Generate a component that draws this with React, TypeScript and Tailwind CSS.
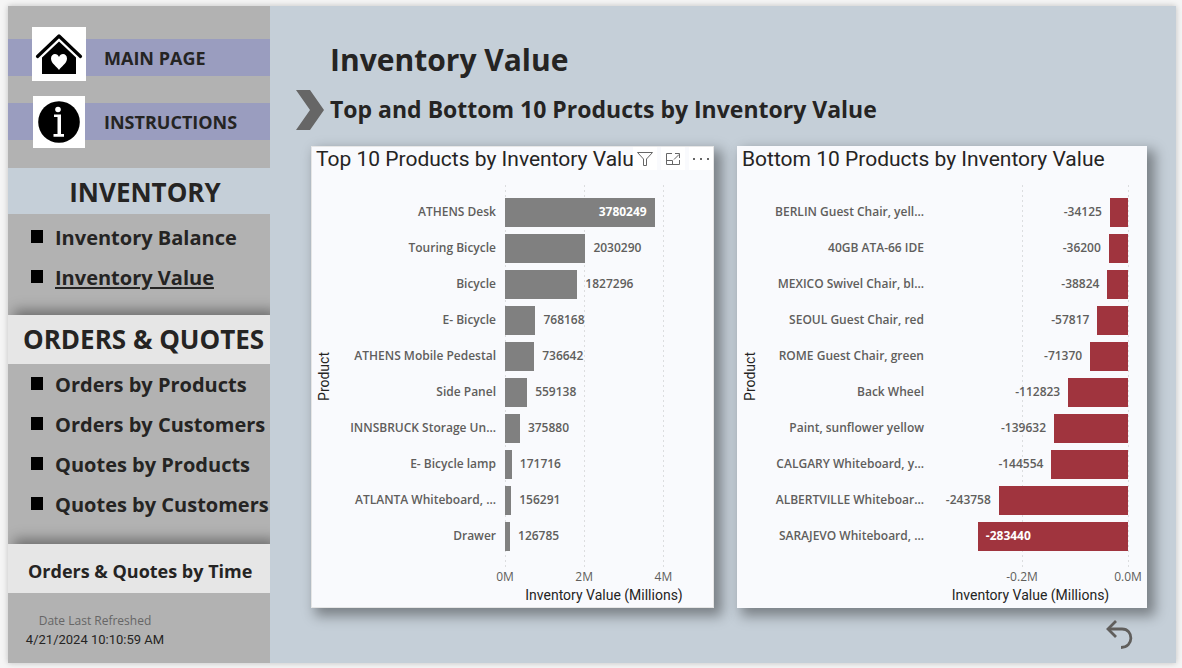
import React from "react";

type Datum = { label: string; value: number; inside?: boolean };
type Tick = { label: string; value: number };

const topProducts: Datum[] = [
  { label: "ATHENS Desk", value: 3780249, inside: true },
  { label: "Touring Bicycle", value: 2030290 },
  { label: "Bicycle", value: 1827296 },
  { label: "E- Bicycle", value: 768168 },
  { label: "ATHENS Mobile Pedestal", value: 736642 },
  { label: "Side Panel", value: 559138 },
  { label: "INNSBRUCK Storage Un...", value: 375880 },
  { label: "E- Bicycle lamp", value: 171716 },
  { label: "ATLANTA Whiteboard, ...", value: 156291 },
  { label: "Drawer", value: 126785 },
];

const bottomProducts: Datum[] = [
  { label: "BERLIN Guest Chair, yell...", value: -34125 },
  { label: "40GB ATA-66 IDE", value: -36200 },
  { label: "MEXICO Swivel Chair, bl...", value: -38824 },
  { label: "SEOUL Guest Chair, red", value: -57817 },
  { label: "ROME Guest Chair, green", value: -71370 },
  { label: "Back Wheel", value: -112823 },
  { label: "Paint, sunflower yellow", value: -139632 },
  { label: "CALGARY Whiteboard, y...", value: -144554 },
  { label: "ALBERTVILLE Whiteboar...", value: -243758 },
  { label: "SARAJEVO Whiteboard, ...", value: -283440, inside: true },
];

function HomeIcon() {
  return (
    <svg viewBox="0 0 54 54" className="size-[54px]" aria-hidden="true">
      <path d="M5.500 29.500 27 9 48.500 29.500" fill="none" stroke="#000" strokeWidth="3.200" strokeLinecap="round" strokeLinejoin="round" />
      <path d="M27 14.500 44 30.500V47H10V30.500Z" fill="#000" />
      <path
        d="M27 43C25 39.500 19 36.500 19 31.500c0-5.500 6.500-6 8-1.500 1.500-4.500 8-4 8 1.500 0 5-6 8-8 11.500Z"
        fill="#fff"
      />
    </svg>
  );
}

function InfoIcon() {
  return (
    <svg viewBox="0 0 52 52" className="size-[52px]" aria-hidden="true">
      <circle cx="26" cy="26" r="20.800" fill="#000" />
      <circle cx="25" cy="13.500" r="2.800" fill="#fff" />
      <path d="M21 18.500h7v19.500h3v2.800H20.500V38h4V21H21Z" fill="#fff" />
    </svg>
  );
}

function PageLink({ icon, children, className }: { icon: React.ReactNode; children: string; className: string }) {
  return (
    <a href="#" className="flex h-[37px] items-center bg-[#9a9dbf]">
      <span className={"flex w-[54px] shrink-0 justify-center " + className}>
        <span className="bg-white">{icon}</span>
      </span>
      <span className="ml-[18px] text-lg leading-6 font-bold">{children}</span>
    </a>
  );
}

function MenuList({ items, current }: { items: string[]; current?: string }) {
  return (
    <ul>
      {items.map((item) => (
        <li key={item} className="flex h-10 items-center gap-3 pl-[23px]">
          <span className="mb-[3px] h-[13px] w-3 shrink-0 bg-black" />
          <a
            href="#"
            aria-current={item === current ? "page" : undefined}
            className={
              item === current
                ? "text-xl font-bold whitespace-nowrap underline decoration-2 underline-offset-2"
                : "text-xl font-bold whitespace-nowrap"
            }
          >
            {item}
          </a>
        </li>
      ))}
    </ul>
  );
}

function Sidebar() {
  return (
    <nav className="flex w-[262px] shrink-0 flex-col overflow-hidden bg-[#b2b2b2]">
      <div className="flex flex-col gap-[27px] pt-[33px] pb-7">
        <PageLink icon={<HomeIcon />} className="ml-6 -mt-[7px]">
          MAIN PAGE
        </PageLink>
        <PageLink icon={<InfoIcon />} className="ml-6">
          INSTRUCTIONS
        </PageLink>
      </div>
      <h2 className="flex h-[46px] items-center justify-center bg-[#c5cfd8] pt-0.5 pl-3 text-[26px] font-bold">INVENTORY</h2>
      <div className="pt-1 pb-[17px]">
        <MenuList items={["Inventory Balance", "Inventory Value"]} current="Inventory Value" />
      </div>
      <h2 className="flex h-[49px] items-center bg-[#e6e6e6] pl-[15px] text-[26px] font-bold whitespace-nowrap shadow-[6px_-5px_12px_rgba(0,0,0,0.38)]">
        ORDERS &amp; QUOTES
      </h2>
      <div className="relative bg-[#b2b2b2] pt-px pb-[19px]">
        <MenuList items={["Orders by Products", "Orders by Customers", "Quotes by Products", "Quotes by Customers"]} />
      </div>
      <a
        href="#"
        className="relative flex h-[49px] items-center bg-[#e6e6e6] pt-1 pl-5 text-lg font-bold whitespace-nowrap shadow-[6px_-5px_12px_rgba(0,0,0,0.38)]"
      >
        Orders &amp; Quotes by Time
      </a>
      <div className="relative flex grow bg-[#b2b2b2] pt-[18px] pl-[15px]">
        <div className="w-[144px] text-center">
          <p className="text-xs leading-5 text-[#666]">Date Last Refreshed</p>
          <p className="font-[Roboto,sans-serif] text-[13px] leading-[18px] whitespace-nowrap">4/21/2024 10:10:59 AM</p>
        </div>
      </div>
    </nav>
  );
}

function ChartTools() {
  const button = "flex h-[23px] w-6 items-center justify-center bg-white";
  return (
    <div className="flex gap-1">
      <button type="button" aria-label="Filters" className={button}>
        <svg viewBox="0 0 16 16" className="size-4" fill="none" stroke="#666">
          <path d="M.5 1.500H15.500L9.500 8V14.500H6.500V8Z" />
        </svg>
      </button>
      <button type="button" aria-label="Focus mode" className={button}>
        <svg viewBox="0 0 16 16" className="size-4" fill="none" stroke="#666">
          <path d="M7 2.500H1.500V13.500H14.500V9M1.500 9.500H7.500V13.500M9 8.500 14 3.500M10 2.500H14.500V7" />
        </svg>
      </button>
      <button type="button" aria-label="More options" className={button}>
        <svg viewBox="0 0 16 16" className="size-4" fill="#666">
          <rect x="0" y="7" width="2" height="2" />
          <rect x="7" y="7" width="2" height="2" />
          <rect x="14" y="7" width="2" height="2" />
        </svg>
      </button>
    </div>
  );
}

type ChartProps = {
  title: string;
  data: Datum[];
  ticks: Tick[];
  domain: number;
  labelColumn: string;
  endPadding: string;
  barColor: string;
  borderColor: string;
  tools?: boolean;
};

function BarChart({ title, data, ticks, domain, labelColumn, endPadding, barColor, borderColor, tools }: ChartProps) {
  const negative = data[0].value < 0;
  const position = (v: number) => (negative ? 100 + (v / domain) * 100 : (v / domain) * 100) + "%";

  return (
    <section
      className={"flex min-w-0 flex-col border bg-[#f9fafd] shadow-[6px_6px_12px_2px_rgba(0,0,0,0.38)] " + borderColor}
    >
      <header className="flex h-[38px] items-start">
        <h3 className="min-w-0 flex-1 overflow-hidden pl-1 font-[Roboto,sans-serif] text-[21px] leading-6 whitespace-nowrap text-[#252423]">
          {title}
        </h3>
        {tools && <ChartTools />}
      </header>
      <div className={"flex " + endPadding}>
        <div className={"flex shrink-0 " + labelColumn}>
          <div className="flex w-6 items-center justify-center">
            <span className="rotate-180 font-[Roboto,sans-serif] text-sm [writing-mode:vertical-rl]">Product</span>
          </div>
          <ul className="flex-1 pt-[9px] pb-[14px] text-right text-xs font-semibold text-[#605e5c]">
            {data.map((d) => (
              <li key={d.label} className="h-9 leading-9 whitespace-nowrap">
                {d.label}
              </li>
            ))}
          </ul>
        </div>
        <div className="relative min-w-0 flex-1 pt-[9px] pb-[14px]">
          {ticks.map((t) => (
            <span
              key={t.label}
              className="absolute inset-y-0 w-px bg-[repeating-linear-gradient(to_bottom,#dcdddf_0_2px,transparent_2px_5px)]"
              style={{ left: position(t.value) }}
            />
          ))}
          {data.map((d) => (
            <div
              key={d.label}
              className={"relative flex h-9 items-center gap-2 text-xs font-semibold " + (negative ? "flex-row-reverse" : "")}
            >
              <div
                className={"flex h-[29px] shrink-0 items-center px-2 " + barColor + (negative ? "" : " justify-end")}
                style={{ width: (Math.abs(d.value) / domain) * 100 + "%", paddingInline: d.inside ? undefined : 0 }}
              >
                {d.inside && <span className="font-bold text-white">{d.value}</span>}
              </div>
              {!d.inside && <span className="text-[#605e5c]">{d.value}</span>}
            </div>
          ))}
        </div>
      </div>
      <div className={"flex pb-[3px] " + endPadding}>
        <div className={"shrink-0 " + labelColumn} />
        <div className="min-w-0 flex-1">
          <div className="relative h-[18px] text-xs leading-[18px] text-[#605e5c]">
            {ticks.map((t) => (
              <span key={t.label} className="absolute -translate-x-1/2" style={{ left: position(t.value) }}>
                {t.label}
              </span>
            ))}
          </div>
          <p className="text-center font-[Roboto,sans-serif] text-sm leading-[18px] whitespace-nowrap text-[#252423]">
            Inventory Value (Millions)
          </p>
        </div>
      </div>
    </section>
  );
}

export default function App() {
  return (
    <div className="flex min-h-screen bg-[#f5f5f5] pt-1.5 pr-1.5 pb-[5px] pl-2 font-['Open_Sans','Noto_Sans',sans-serif] text-[#252423]">
      <div className="flex flex-1 shadow-[0_0_6px_rgba(0,0,0,0.22)]">
        <Sidebar />
        <main className="flex min-w-0 flex-1 flex-col bg-[#c5cfd8] pt-8 pr-[29px] pl-[26px]">
          <h1 className="pl-[34px] text-[30px] leading-[44px] font-bold">Inventory Value</h1>
          <div className="mt-2 flex items-center gap-1.5">
            <svg viewBox="0 0 28 40" className="h-10 w-7 shrink-0" aria-hidden="true">
              <path d="M0 0H14L28 20 14 40H0L14 20Z" fill="#666" />
            </svg>
            <h2 className="pb-0.5 text-[23px] leading-8 font-bold">Top and Bottom 10 Products by Inventory Value</h2>
          </div>
          <div className="mt-4 ml-[15px] grid grid-cols-[403fr_410fr] gap-[23px]">
            <BarChart
              title="Top 10 Products by Inventory Value"
              data={topProducts}
              ticks={[
                { label: "0M", value: 0 },
                { label: "2M", value: 2000000 },
                { label: "4M", value: 4000000 },
              ]}
              domain={5000000}
              labelColumn="w-[193px] pr-[9px]"
              endPadding="pr-2.5"
              barColor="bg-[#808080]"
              borderColor="border-[#e6e6e6]"
              tools
            />
            <BarChart
              title="Bottom 10 Products by Inventory Value"
              data={bottomProducts}
              ticks={[
                { label: "-0.2M", value: -200000 },
                { label: "0.0M", value: 0 },
              ]}
              domain={368000}
              labelColumn="w-[195px] pr-[9px]"
              endPadding="pr-[18px]"
              barColor="bg-[#a0343e]"
              borderColor="border-[#f9fafd]"
            />
          </div>
          <div className="flex justify-end pt-2 pr-3">
            <button type="button" aria-label="Back" className="size-8">
              <svg viewBox="0 0 32 32" className="size-8 overflow-visible" fill="none" stroke="#605e5c" strokeWidth="2.800">
                <path d="M5 13H19C31 13 31 31.500 18 31.500" />
                <path d="M13 5 5 13 13 21" />
              </svg>
            </button>
          </div>
        </main>
      </div>
    </div>
  );
}
